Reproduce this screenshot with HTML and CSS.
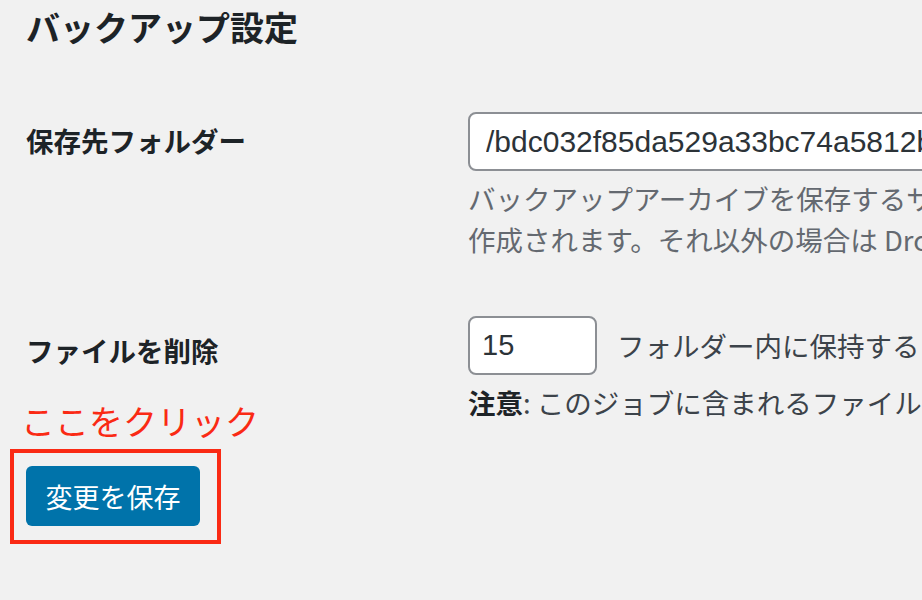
FILE: index.html
```html
<!DOCTYPE html>
<html lang="ja">
<head>
    <meta charset="UTF-8">
    <meta name="viewport" content="width=device-width, initial-scale=1.0">
    <title>バックアップ設定</title>
    <link rel="stylesheet" href="styles.css">
</head>
<body>
    <div class="wrap">
        <h2 class="title">バックアップ設定</h2>

        <div class="form-table">
            <div class="row">
                <div class="label">保存先フォルダー</div>
                <div class="field">
                    <input class="text-input" type="text" value="/bdc032f85da529a33bc74a5812b7e4c1/backups">
                    <p class="description">バックアップアーカイブを保存するサブフォルダーを指定します。App フォルダーを使用する場合は Apps/BackWPup 内に<br>作成されます。それ以外の場合は Dropbox のルートに作成されます。</p>
                </div>
            </div>

            <div class="row row-count">
                <div class="label">ファイルを削除</div>
                <div class="field">
                    <div class="inline">
                        <input class="text-input count" type="number" value="15">
                        <span>フォルダー内に保持するファイルの最大数 (0 = 削除しない)</span>
                    </div>
                    <p class="note"><strong>注意</strong>: このジョブに含まれるファイルのみが削除されます。</p>
                </div>
            </div>
        </div>

        <div class="submit">
            <p class="callout">ここをクリック</p>
            <div class="highlight">
                <button class="button-primary" type="submit">変更を保存</button>
            </div>
        </div>
    </div>
</body>
</html>
```

FILE: styles.css
```css
body {
    margin: 0;
    background-color: #f1f1f1;
    color: #1d2327;
    font-family: "Noto Sans CJK JP", sans-serif;
    overflow: hidden;
}

.wrap {
    padding-left: 26px;
}

.title {
    margin: 5px 0 0;
    font-size: 34px;
    line-height: 44px;
    font-weight: 700;
}

.form-table {
    margin-top: 63px;
}

.row {
    display: flex;
}

.row + .row {
    margin-top: 56px;
}

.label {
    flex: none;
    width: 442px;
    padding-top: 9.5px;
    font-size: 27.5px;
    line-height: 36px;
    font-weight: 700;
}

.row-count .label {
    padding-top: 15.5px;
}

.field {
    flex: none;
    width: 960px;
}

.text-input {
    display: block;
    box-sizing: border-box;
    width: 820px;
    height: 59px;
    margin: 0;
    padding: 0 16px;
    border: 2px solid #8c8f94;
    border-radius: 8px;
    background-color: #fff;
    color: #2c3338;
    font-family: "Liberation Sans", sans-serif;
    font-size: 30px;
}

.text-input.count {
    width: 129px;
    padding: 0 12px;
    font-size: 29px;
    -moz-appearance: textfield;
}

.text-input.count::-webkit-inner-spin-button,
.text-input.count::-webkit-outer-spin-button {
    -webkit-appearance: none;
    margin: 0;
}

.inline {
    display: flex;
    align-items: center;
    gap: 20px;
    font-size: 27.5px;
    line-height: 41px;
    color: #3c434a;
    white-space: nowrap;
}

.description,
.note {
    margin: 7px 0 0;
    font-size: 27.5px;
    line-height: 41px;
    white-space: nowrap;
}

.description {
    color: #646970;
}

.note {
    color: #3c434a;
}

.note strong {
    color: #1d2327;
}

.submit {
    position: relative;
    display: flex;
    margin: 26px 0 0 -16px;
}

.callout {
    position: absolute;
    top: -45.5px;
    left: 11px;
    margin: 0;
    font-size: 34px;
    line-height: 34px;
    color: #fa2a14;
    white-space: nowrap;
}

.highlight {
    padding: 13px 17px 14px 12px;
    border: 4px solid #fa2a14;
}

.button-primary {
    display: block;
    width: 174px;
    height: 60px;
    padding: 0;
    border: none;
    border-radius: 6px;
    background-color: #0073aa;
    color: #fff;
    font-family: "Noto Sans CJK JP", sans-serif;
    font-size: 27px;
    cursor: pointer;
}
```
